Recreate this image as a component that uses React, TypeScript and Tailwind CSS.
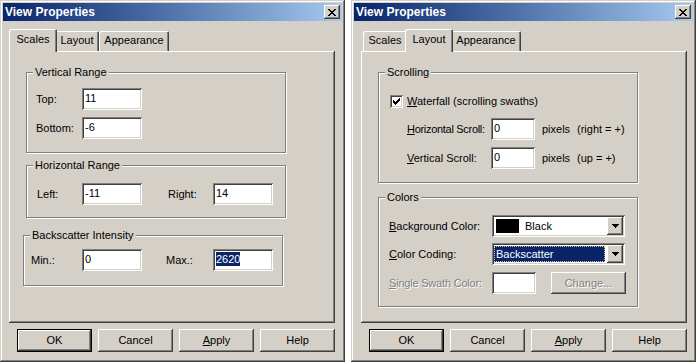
import React from 'react';

const face = 'bg-[#d4d0c8]';
const raised = 'shadow-[inset_-1px_-1px_#404040,inset_1px_1px_#ffffff,inset_-2px_-2px_#808080]';
const sunken = 'shadow-[inset_1px_1px_#808080,inset_-1px_-1px_#ffffff,inset_2px_2px_#404040,inset_-2px_-2px_#d4d0c8]';

const CLOSE = ['##....##', '.##..##.', '..####..', '...##...', '..####..', '.##..##.', '##....##'];
const CHECK = ['......#', '.....##', '#...###', '##.###.', '#####..', '.###...', '..#....'];
const ARROW = ['#######', '.#####.', '..###..', '...#...'];

const Pixels = ({ rows }: { rows: string[] }) => (
  <svg width={rows[0].length} height={rows.length} shapeRendering="crispEdges" className="block">
    {rows.flatMap((r, y) =>
      r.split('').map((c, x) => (c === '#' ? <rect key={`${x}-${y}`} x={x} y={y} width={1} height={1} fill="#000" /> : null))
    )}
  </svg>
);

const TitleBar = () => (
  <div className="h-[18px] flex items-center justify-between pl-[2px] pr-[2px] bg-linear-to-r from-[#0a246a] to-[#a6caf0]">
    <span className="text-white font-bold text-[12px]">View Properties</span>
    <div className={`w-[16px] h-[14px] ${face} ${raised} flex items-center justify-center`}>
      <Pixels rows={CLOSE} />
    </div>
  </div>
);

const tabs = [
  { name: 'Scales', w: 'w-[44px]', ws: 'w-[48px]' },
  { name: 'Layout', w: 'w-[44px]', ws: 'w-[48px]' },
  { name: 'Appearance', w: 'w-[70px]', ws: 'w-[74px]' },
];

const Tabs = ({ active }: { active: string }) => (
  <div className="flex items-end h-[22px] pl-[2px]">
    {tabs.map((t) =>
      t.name === active ? (
        <div
          key={t.name}
          className={`relative z-10 -mx-[2px] -mb-[1px] h-[23px] ${t.ws} ${face} rounded-t-[2px] shadow-[inset_1px_1px_#ffffff,inset_-1px_0_#404040,inset_-2px_0_#808080] flex items-center justify-center pb-[3px]`}
        >
          {t.name}
        </div>
      ) : (
        <div
          key={t.name}
          className={`h-[20px] ${t.w} rounded-t-[2px] shadow-[inset_1px_1px_#ffffff,inset_-1px_0_#404040,inset_-2px_0_#808080] flex items-center justify-center pb-[1px]`}
        >
          {t.name}
        </div>
      )
    )}
  </div>
);

const Btn = ({ children, def }: { children: React.ReactNode; def?: boolean }) => (
  <div className={`w-[75px] h-[23px] ${face} ${raised} flex items-center justify-center ${def ? 'border border-black' : ''}`}>
    {children}
  </div>
);

const Group = ({ label, className, children }: { label: string; className: string; children: React.ReactNode }) => (
  <div className={`relative border border-[#808080] shadow-[inset_1px_1px_#ffffff,1px_1px_#ffffff] ${className}`}>
    <span className={`absolute left-[6px] top-[-7px] px-[2px] leading-[13px] ${face}`}>{label}</span>
    {children}
  </div>
);

const Field = ({ w, children }: { w: string; children?: React.ReactNode }) => (
  <div className={`${w} h-[22px] bg-white ${sunken} flex items-center pl-[3px] pb-[2px]`}>{children}</div>
);

const Dialog = ({ active, inset, children }: { active: string; inset: string; children: React.ReactNode }) => (
  <div className={`w-[345px] h-[362px] ${face} p-[3px] flex flex-col shadow-[inset_-1px_-1px_#404040,inset_1px_1px_#d4d0c8,inset_-2px_-2px_#808080,inset_2px_2px_#ffffff]`}>
    <TitleBar />
    <div className={`mt-[8px] ${inset} w-[326px] flex flex-col`}>
      <Tabs active={active} />
      <div className={`h-[272px] ${raised} flex flex-col`}>{children}</div>
    </div>
    <div className={`mt-[6px] ${inset} w-[326px] flex justify-end gap-[6px]`}>
      <Btn def>OK</Btn>
      <Btn>Cancel</Btn>
      <Btn>
        <span className="underline">A</span>pply
      </Btn>
      <Btn>Help</Btn>
    </div>
  </div>
);

const Combo = ({ children }: { children: React.ReactNode }) => (
  <div className={`w-[133px] h-[22px] bg-white ${sunken} p-[2px] flex`}>
    <div className="flex-1 flex items-center">{children}</div>
    <div className={`w-[16px] h-[18px] ${face} ${raised} flex items-center justify-center`}>
      <Pixels rows={ARROW} />
    </div>
  </div>
);

const Scales = () => (
  <>
    <Group label="Vertical Range" className="ml-[17px] mt-[21px] w-[260px] h-[81px] pt-[15px]">
      <div className="flex items-center pl-[9px]">
        <span className="w-[46px]">Top:</span>
        <Field w="w-[60px]">11</Field>
      </div>
      <div className="flex items-center pl-[9px] mt-[7px]">
        <span className="w-[46px]">Bottom:</span>
        <Field w="w-[60px]">-6</Field>
      </div>
    </Group>
    <Group label="Horizontal Range" className="ml-[17px] mt-[12px] w-[260px] h-[53px] pt-[17px]">
      <div className="flex items-center pl-[10px]">
        <span className="w-[45px]">Left:</span>
        <Field w="w-[60px]">-11</Field>
        <span className="ml-[26px] w-[45px]">Right:</span>
        <Field w="w-[60px]">14</Field>
      </div>
    </Group>
    <Group label="Backscatter Intensity" className="ml-[14px] mt-[17px] w-[260px] h-[51px] pt-[13px]">
      <div className="flex items-center pl-[7px]">
        <span className="w-[51px]">Min.:</span>
        <Field w="w-[60px]">0</Field>
        <span className="ml-[24px] w-[47px]">Max.:</span>
        <Field w="w-[60px]">
          <span className="bg-[#0a246a] text-white leading-[14px]">2620</span>
        </Field>
      </div>
    </Group>
  </>
);

const Layout = () => (
  <>
    <Group label="Scrolling" className="ml-[17px] mt-[21px] w-[260px] h-[111px] pt-[22px]">
      <div className="flex items-center pl-[11px]">
        <div className={`w-[13px] h-[13px] bg-white ${sunken} flex items-center justify-center`}>
          <Pixels rows={CHECK} />
        </div>
        <span className="ml-[4px]">
          <span className="underline">W</span>aterfall (scrolling swaths)
        </span>
      </div>
      <div className="flex items-center pl-[28px] mt-[10px]">
        <span className="w-[84px] tracking-[-0.3px]">
          <span className="underline">H</span>orizontal Scroll:
        </span>
        <Field w="w-[44px]">0</Field>
        <span className="ml-[7px] w-[35px]">pixels</span>
        <span>(right = +)</span>
      </div>
      <div className="flex items-center pl-[28px] mt-[7px]">
        <span className="w-[84px]">
          <span className="underline">V</span>ertical Scroll:
        </span>
        <Field w="w-[44px]">0</Field>
        <span className="ml-[7px] w-[35px]">pixels</span>
        <span>(up = +)</span>
      </div>
    </Group>
    <Group label="Colors" className="ml-[17px] mt-[14px] w-[260px] h-[110px] pt-[17px]">
      <div className="flex items-center pl-[10px]">
        <span className="w-[103px]">
          <span className="underline">B</span>ackground Color:
        </span>
        <Combo>
          <div className="ml-[2px] w-[23px] h-[14px] bg-black" />
          <span className="ml-[6px]">Black</span>
        </Combo>
      </div>
      <div className="flex items-center pl-[10px] mt-[6px]">
        <span className="w-[103px]">
          <span className="underline">C</span>olor Coding:
        </span>
        <Combo>
          <div className="flex-1 mr-[2px] h-[16px] bg-[#0a246a] text-white border border-dotted border-[#d8c890] flex items-center pl-[1px]">
            Backscatter
          </div>
        </Combo>
      </div>
      <div className="flex items-center pl-[10px] mt-[7px] text-[#808080] [text-shadow:1px_1px_0_#ffffff]">
        <span className="w-[103px] tracking-[-0.2px]">
          <span className="underline">S</span>ingle Swath Color:
        </span>
        <Field w="w-[44px]" />
        <div className={`ml-[15px] w-[75px] h-[22px] ${face} ${raised} flex items-center justify-center`}>Change...</div>
      </div>
    </Group>
  </>
);

const App: React.FC = () => (
  <div className="w-[698px] h-[364px] bg-white flex gap-[6px] text-[11px] leading-none text-black font-['Liberation_Sans',Arial,sans-serif]">
    <Dialog active="Scales" inset="ml-[6px]">
      <Scales />
    </Dialog>
    <Dialog active="Layout" inset="ml-[7px]">
      <Layout />
    </Dialog>
  </div>
);

export default App;
